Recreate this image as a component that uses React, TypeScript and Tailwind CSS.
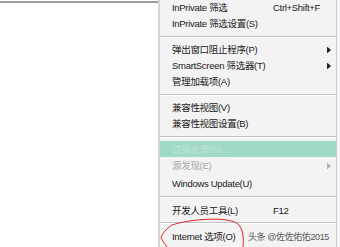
import React from "react";

const font = {
  fontFamily: '"Liberation Sans", "Noto Sans CJK SC", sans-serif',
};

function Arrow({ faded }: { faded?: boolean }) {
  return (
    <svg width="4" height="7" viewBox="0 0 4 7" className="absolute right-[5px] top-1/2 -translate-y-1/2">
      <path d="M0 0 L4 3.5 L0 7 Z" fill={faded ? "#b0b0b0" : "#222"} />
    </svg>
  );
}

function Row({
  label,
  shortcut,
  arrow,
  faded,
  h = "h-[16px]",
  highlight,
}: {
  label: string;
  shortcut?: string;
  arrow?: boolean;
  faded?: boolean;
  h?: string;
  highlight?: boolean;
}) {
  return (
    <div
      className={`relative flex items-center ${h} pl-[12px] text-[9.5px] tracking-[-0.3px] leading-none ${
        highlight ? "bg-[#9fd9c7]" : ""
      } ${faded ? (highlight ? "text-[#c4e4da]" : "text-[#a8a8a8]") : "text-[#1a1a1a]"}`}
    >
      <span className="w-[101px] whitespace-nowrap">{label}</span>
      {shortcut && <span className="whitespace-nowrap">{shortcut}</span>}
      {arrow && <Arrow faded={faded} />}
    </div>
  );
}

function Sep({ h = "h-[10px]", top = "pt-[4px]" }: { h?: string; top?: string }) {
  return (
    <div className={`${h} ${top}`}>
      <div className="h-px bg-[#c2c2c2]" />
      <div className="h-px bg-white" />
    </div>
  );
}

export default function App() {
  return (
    <div className="relative w-[340px] h-[247px] overflow-hidden bg-white flex" style={font}>
      <div className="w-[158px] h-full flex flex-col">
        <div className="h-[1px]" />
        <div className="h-[2px] bg-[#9c9c9c]" />
      </div>
      <div className="w-[2px] h-full bg-[#d6d6d6]" />
      <div className="w-[177px] h-full bg-[#f3f3f3] border-r border-[#c8c8c8] flex flex-col">
        <Row label="InPrivate 筛选" shortcut="Ctrl+Shift+F" />
        <Row label="InPrivate 筛选设置(S)" />
        <Sep />
        <Row label="弹出窗口阻止程序(P)" arrow />
        <Row label="SmartScreen 筛选器(T)" arrow h="h-[17px]" />
        <Row label="管理加载项(A)" h="h-[15px]" />
        <Sep />
        <Row label="兼容性视图(V)" />
        <Row label="兼容性视图设置(B)" h="h-[17px]" />
        <Sep h="h-[9px]" />
        <Row label="订阅此源(F)..." faded highlight h="h-[16px]" />
        <Row label="源发现(E)" faded arrow h="h-[17px]" />
        <Row label="Windows Update(U)" h="h-[19px]" />
        <Sep h="h-[9px]" top="pt-[3px]" />
        <Row label="开发人员工具(L)" shortcut="F12" h="h-[17px]" />
        <Sep h="h-[8px]" top="pt-[3px]" />
        <Row label="Internet 选项(O)" h="h-[20px]" />
      </div>
      <div className="flex-1 h-full bg-[#f7f7fb]" />
      <div className="absolute left-[248px] top-[233px] text-[9px] tracking-[-0.4px] leading-none text-[#555] whitespace-nowrap">
        头条 @佐佐佑佑2015
      </div>
      <svg className="absolute left-0 top-0" width="340" height="247" viewBox="0 0 340 247">
        <path
          d="M172 225 C 190 219, 228 216, 238 224 C 243 229, 244 238, 243 247"
          fill="none"
          stroke="#d8262a"
          strokeWidth="1"
        />
        <path
          d="M172 225 C 166 229, 162 234, 161 238 C 163 242, 166 245, 168 248"
          fill="none"
          stroke="#d8262a"
          strokeWidth="1"
        />
      </svg>
    </div>
  );
}
